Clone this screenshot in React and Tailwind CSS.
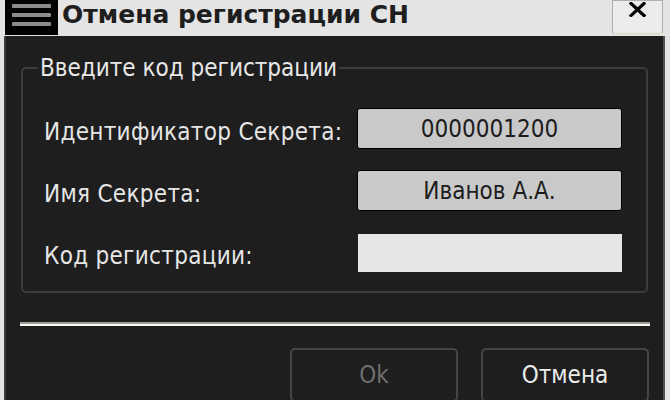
import React from 'react';

const rows = [
  { label: 'Идентификатор Секрета:', value: '0000001200', kind: 'readonly' },
  { label: 'Имя Секрета:', value: 'Иванов А.А.', kind: 'readonly' },
  { label: 'Код регистрации:', value: '', kind: 'input' },
];

const App = () => {
  return (
    <div className="w-[670px] h-[400px] overflow-hidden bg-[#e4e4e4] flex flex-col font-['DejaVu_Sans_Condensed','DejaVu_Sans',sans-serif]">
      {/* Title bar */}
      <div className="h-[36px] flex items-start shrink-0">
        <div className="ml-[5px] w-[53px] h-[35px] bg-black flex flex-col items-center pt-[4px] gap-[5px]">
          <div className="w-[39px] h-[4px] bg-[#8c8c8c] rounded-[1px]" />
          <div className="w-[39px] h-[4px] bg-[#8c8c8c] rounded-[1px]" />
          <div className="w-[39px] h-[4px] bg-[#8c8c8c] rounded-[1px]" />
        </div>
        <div className="ml-[4px] text-[25px] leading-[30px] font-bold text-[#1e1e1e] font-['DejaVu_Sans',sans-serif]">
          Отмена регистрации СН
        </div>
        <div className="flex-1" />
        <button className="shrink-0 mr-[7px] w-[51px] h-[34px] bg-[#ececec] border border-[#b0b0a8] border-b-[#dcd8c4] rounded-b-[3px] flex items-start justify-center pt-[1px]">
          <svg width="17" height="15" viewBox="0 0 17 15">
            <path d="M2 1.5 L15 13.5 M15 1.5 L2 13.5" stroke="#000" strokeWidth="3.2" strokeLinecap="square" />
          </svg>
        </button>
      </div>

      {/* Body */}
      <div className="flex-1 ml-[4px] mr-[5px] border-l-2 border-r-2 border-l-[#3c3c3c] border-r-[#505050] bg-[#1e1e1e] flex flex-col">
        <fieldset className="ml-[15px] mt-[20px] w-[627px] h-[237px] border-2 border-[#3c3c3a] rounded-[5px] p-0">
          <legend className="ml-[15px] px-[2px] text-[24px] leading-[24px] text-[#e8e8e8]">
            Введите код регистрации
          </legend>
          <div className="mt-[28px] pl-[21px] pr-[24px] flex flex-col gap-[21px]">
            {rows.map(row => (
              <div key={row.label} className="flex items-center justify-between h-[41px]">
                <span className="text-[24px] leading-[28px] tracking-[0.3px] text-[#e6e6e6] pt-[6px]">{row.label}</span>
                {row.kind === 'readonly' ? (
                  <div className="w-[265px] h-[41px] bg-[#c9c9c9] border border-black rounded-[3px] flex items-center justify-center text-[24px] text-[#1c1c1c]">
                    {row.value}
                  </div>
                ) : (
                  <input
                    type="text"
                    className="w-[264px] h-[38px] bg-[#e6e6e6] outline-none px-2 text-[24px]"
                  />
                )}
              </div>
            ))}
          </div>
        </fieldset>

        <div className="ml-[14px] w-[630px] mt-[29px] h-[4px] bg-[#fafafa] border-t-2 border-[#a29e96]" />

        <div className="mt-[22px] w-[643px] flex justify-end gap-[23px]">
          <button className="w-[168px] h-[54px] border-2 border-[#454545] rounded-[5px] text-[24px] text-[#6e6e6e]">
            Ok
          </button>
          <button className="w-[168px] h-[54px] border-2 border-[#454545] rounded-[5px] text-[24px] text-[#ececec]">
            Отмена
          </button>
        </div>
      </div>
    </div>
  );
};

export default App;
